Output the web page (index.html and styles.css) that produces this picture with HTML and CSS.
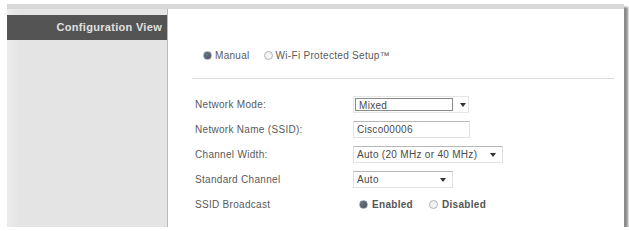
FILE: index.html
```html
<!DOCTYPE html>
<html lang="en">
<head>
    <meta charset="UTF-8">
    <title>Configuration View</title>
    <link rel="stylesheet" href="styles.css">
</head>
<body>

    <div class="frame">
        <!-- Left menu -->
        <div class="sidebar">
            <div class="side-title">Configuration View</div>
        </div>

        <!-- Settings -->
        <div class="content">
            <div class="mode-row">
                <span class="radio checked"></span>
                <span class="mode-label">Manual</span>
                <span class="radio"></span>
                <span class="mode-label">Wi-Fi Protected Setup™</span>
            </div>
            <div class="rule"></div>

            <div class="form">
                <div class="label">Network Mode:</div>
                <div>
                    <div class="select mixed">
                        <span class="value">Mixed</span>
                        <span class="arrow"></span>
                    </div>
                </div>

                <div class="label">Network Name (SSID):</div>
                <div><div class="text-input">Cisco00006</div></div>

                <div class="label">Channel Width:</div>
                <div>
                    <div class="select wide">
                        <span class="value">Auto (20 MHz or 40 MHz)</span>
                        <span class="arrow"></span>
                    </div>
                </div>

                <div class="label">Standard Channel</div>
                <div>
                    <div class="select narrow">
                        <span class="value">Auto</span>
                        <span class="arrow"></span>
                    </div>
                </div>

                <div class="label">SSID Broadcast</div>
                <div class="radio-group">
                    <span class="radio checked"></span>
                    <span class="strong">Enabled</span>
                    <span class="radio"></span>
                    <span class="strong">Disabled</span>
                </div>
            </div>
        </div>
    </div>

</body>
</html>
```

FILE: styles.css
```css
body {
    margin: 0;
    background-color: #fff;
    font-family: "Liberation Sans", Arial, sans-serif;
    font-size: 10px;
    letter-spacing: 0.3px;
    color: #5a5a5a;
}
.frame {
    display: flex;
    box-sizing: border-box;
    width: 617px;
    height: 223px;
    margin: 4px 0 0 7px;
    background-color: #e4e4e4;
    border-top: 5px solid #d8d8d8;
    box-shadow: 4px 3px 2px rgba(0, 0, 0, 0.45);
}
.sidebar {
    width: 160px;
    border-right: 1px solid #b8b8b8;
    background: linear-gradient(to right, #ececec 0, #e4e4e4 12px);
}
.side-title {
    margin-top: 6px;
    height: 25px;
    line-height: 25px;
    padding-right: 5px;
    text-align: right;
    background-color: #545454;
    color: #e0e0e0;
    font-weight: bold;
    font-size: 11px;
}
.content {
    flex: 1;
    background-color: #fff;
    padding: 40px 10px 0 27px;
}
.mode-row {
    display: flex;
    align-items: center;
    height: 12px;
    margin-left: 8px;
}
.mode-label {
    margin-left: 3px;
    margin-right: 14px;
}
.radio {
    display: inline-block;
    box-sizing: border-box;
    width: 9px;
    height: 9px;
    border-radius: 50%;
    border: 1px solid #b4b4b4;
    background-color: #f3f3f3;
}
.radio.checked {
    border-color: #9aa3ab;
    background: radial-gradient(circle at 40% 40%, #6b7783, #3e4852);
}
.rule {
    height: 1px;
    margin: 17px 0 13px -3px;
    background-color: #dcdcdc;
}
.form {
    display: grid;
    grid-template-columns: 158px 1fr;
    grid-auto-rows: 25px;
    align-items: center;
}
.select, .text-input {
    display: flex;
    align-items: center;
    box-sizing: border-box;
    height: 17px;
    padding-left: 3px;
    border: 1px solid #e2e2e2;
    border-top-color: #b8b8b8;
    color: #4a4a4a;
}
.select .value {
    flex: 1;
}
.arrow {
    width: 0;
    height: 0;
    margin-right: 6px;
    border-left: 3px solid transparent;
    border-right: 3px solid transparent;
    border-top: 4px solid #333;
}
.select.mixed {
    width: 116px;
    padding-left: 0;
    border-color: #e6e6e6;
}
.select.mixed .value {
    flex: none;
    width: 98px;
    height: 13px;
    line-height: 13px;
    padding-left: 3px;
    box-sizing: border-box;
    border: 1px solid #8a8a8a;
    margin-left: 1px;
}
.select.mixed .arrow {
    margin-left: 7px;
}
.select.wide {
    width: 150px;
}
.select.narrow {
    width: 100px;
}
.text-input {
    width: 117px;
}
.radio-group {
    display: flex;
    align-items: center;
    padding-left: 6px;
}
.strong {
    font-weight: bold;
    color: #555;
    margin-left: 4px;
    margin-right: 16px;
}
```
